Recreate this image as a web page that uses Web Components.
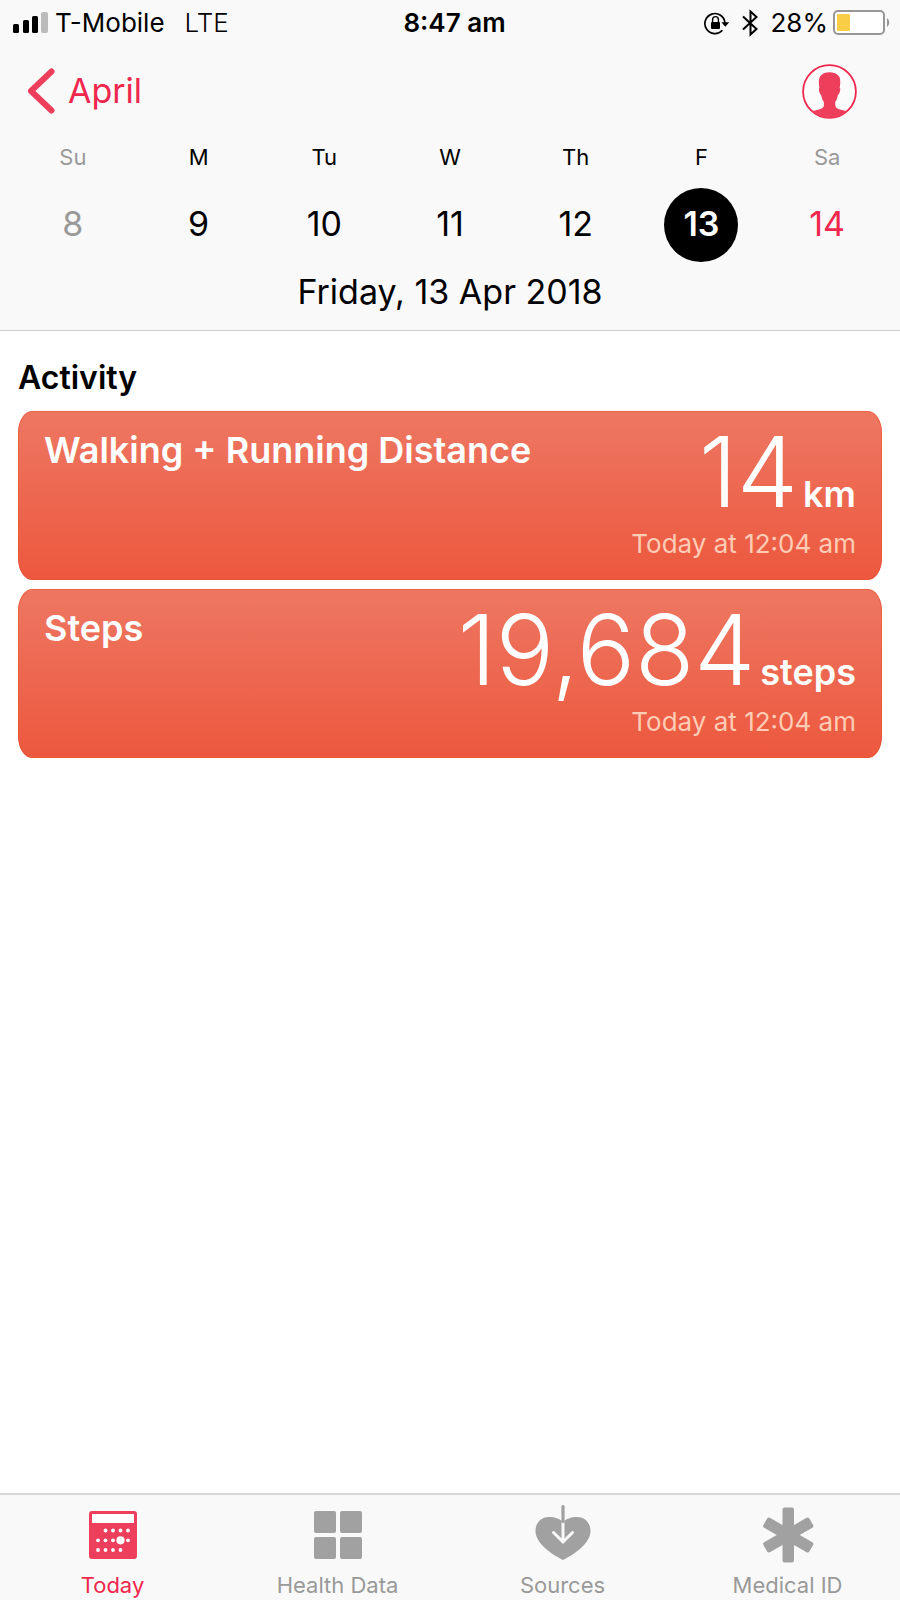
<!DOCTYPE html>
<html lang="en">
<head>
<meta charset="utf-8">
<meta name="viewport" content="width=device-width, initial-scale=1">
<title>Health</title>
<style>
html, body { margin: 0; height: 100%; }
body {
  font-family: Inter, Roboto, sans-serif;
  color: #000;
  background: #fff;
  --accent: #ed3f5c;
  --accent-text: #f0274d;
  --bar: #f9f9f9;
  --line: #cbcbcb;
  --muted: #999;
}
</style>
</head>
<body>
<health-app></health-app>

<script>
function define(name, html) {
  const template = document.createElement('template');
  template.innerHTML = html;
  customElements.define(name, class extends HTMLElement {
    constructor() {
      super();
      this.attachShadow({ mode: 'open' }).append(template.content.cloneNode(true));
    }
  });
}

define('status-bar', `
<style>
  :host { display: grid; grid-template-columns: 1fr auto 1fr; align-items: center; height: 46px; padding: 0 9px 0 12px; font-size: 26px; line-height: 32px; }
  .side { display: flex; align-items: center; }
  .carrier { margin-left: 7px; }
  .network { margin-left: 20px; font-weight: 300; }
  .time { padding-left: 6px; font-weight: 600; }
  .right { justify-content: flex-end; }
  .bluetooth { margin: 0 12px 0 11px; }
  .battery { margin-left: 5px; }
  svg { display: block; flex: none; }
</style>
<div class="side">
  <svg width="36" height="24" viewBox="0 0 36 24" role="img" aria-label="Signal: three of four bars">
    <rect x="1" y="13" width="6" height="9" rx="1.500"/><rect x="11" y="9" width="6" height="13" rx="1.500"/>
    <rect x="20" y="5" width="6" height="17" rx="1.500"/><rect x="29" y="1" width="7" height="21" rx="2" fill="#bbb"/>
  </svg>
  <span class="carrier">T-Mobile</span><span class="network">LTE</span>
</div>
<time class="time">8:47 am</time>
<div class="side right">
  <svg width="26" height="24" viewBox="0 0 26 24" role="img" aria-label="Orientation locked">
    <path d="M18.4 19.2A10 10 0 1 1 20.9 12" fill="none" stroke="#000" stroke-width="1.7"/>
    <path d="M17.4 11.2h7.8L21.3 15.8z"/>
    <rect x="7" y="11" width="9" height="7" rx="1"/>
    <path d="M8.6 11V8.5a2.9 2.9 0 0 1 5.8 0V11" fill="none" stroke="#000" stroke-width="1.4"/>
  </svg>
  <svg class="bluetooth" width="18" height="28" viewBox="0 0 18 28" role="img" aria-label="Bluetooth on">
    <path d="M2 7.500 15.500 20 9.500 25.500V2.500L15.500 8 2 20.500" fill="none" stroke="#000" stroke-width="2"/>
  </svg>
  <span>28%</span>
  <svg class="battery" width="58" height="26" viewBox="0 0 58 26" role="img" aria-label="Battery 28 percent">
    <rect x="1" y="1" width="50" height="23" rx="4" fill="#fff" stroke="#979797" stroke-width="2"/>
    <rect x="4" y="4" width="13" height="17" rx="1" fill="#f9ce46"/>
    <path d="M54 8c3 2 3 7 0 9z" fill="#979797"/>
  </svg>
</div>
`);

define('nav-bar', `
<style>
  :host { display: flex; align-items: center; justify-content: space-between; height: 90px; padding: 0 43px 0 27px; }
  a { display: flex; align-items: center; gap: 13px; color: var(--accent-text); font-size: 34px; line-height: 44px; text-decoration: none; }
  button { padding: 0; border: 0; background: none; }
  svg { display: block; }
</style>
<a href="#april">
  <svg width="28" height="46" viewBox="0 0 28 46" aria-hidden="true"><path d="M24.500 3.500 4 23 24.500 42.500" fill="none" stroke="var(--accent)" stroke-width="6" stroke-linecap="round" stroke-linejoin="round"/></svg>
  <slot></slot>
</a>
<button type="button" aria-label="Profile">
  <svg width="55" height="55" viewBox="0 0 55 55">
    <circle cx="27.500" cy="27.500" r="26.400" fill="#fbfbfb" stroke="var(--accent-text)" stroke-width="1.800"/>
    <path d="M10 47.500c4-2 9-1.300 11.400-4.500.8-1.500.5-4 .3-5.500-1.400-1.500-2-4-2.500-6.500-1.500-1-2.400-4-2.300-6.500l.6-.3c-.8-4-1.300-10 1.200-12.500 2-2.500 5-3.500 8.800-3.500s6.500 1 8.800 3.300c2.800 2.500 2 8.700 1.300 12.700l.7.300c0 2.500-.8 5.500-2.400 6.500-.5 2.500-1.100 5-2.500 6.500-.2 1.500-.3 4 .4 5.500 2.200 3.200 7.200 2.500 11.200 4.500A26.500 26.500 0 0 1 10 47.500z" fill="var(--accent)"/>
  </svg>
</button>
`);

define('week-day', `
<style>
  :host { display: flex; flex-direction: column; align-items: center; }
  .name { font-size: 22px; line-height: 28px; }
  button { box-sizing: border-box; width: 74px; height: 74px; margin-top: 17px; padding: 0 0 2px; border: 0; border-radius: 50%; background: none; color: inherit; font: inherit; font-size: 34px; line-height: 40px; }
  :host([weekend]) { color: var(--muted); }
  :host([upcoming]) button { color: var(--accent-text); }
  :host([selected]) button { background: #000; color: #fff; font-weight: 600; }
</style>
<span class="name"><slot name="name"></slot></span>
<button type="button"><slot></slot></button>
`);

define('week-strip', `
<style>
  :host { display: block; padding: 7px 10px 16px; }
  .days { display: grid; grid-template-columns: repeat(7, 1fr); }
  .date { margin-top: 8px; text-align: center; font-size: 34px; line-height: 44px; }
</style>
<div class="days"><slot></slot></div>
<div class="date"><slot name="date"></slot></div>
`);

define('metric-card', `
<style>
  :host { display: grid; grid-template-columns: auto 1fr; align-items: start; padding: 18px 26px 20px; border-radius: 14px / 22px; background: linear-gradient(#ee7762, #ec583e); box-shadow: inset 0 0 0 1px #e9502f80; color: #fff; }
  .title { margin: 0; font-size: 36px; line-height: 42px; font-weight: 600; }
  .value { display: flex; justify-content: flex-end; align-items: baseline; gap: 5px; }
  .number { font-size: 97px; line-height: 86px; font-weight: 300; }
  .unit { font-size: 36px; line-height: 42px; font-weight: 600; }
  .when { grid-column: 1 / 3; margin-top: 13px; text-align: right; font-size: 26px; line-height: 32px; color: #ffccb5; }
</style>
<h3 class="title"><slot name="title"></slot></h3>
<div class="value"><span class="number"><slot></slot></span><span class="unit"><slot name="unit"></slot></span></div>
<div class="when"><slot name="when"></slot></div>
`);

define('metric-section', `
<style>
  :host { display: block; padding: 27px 18px; }
  h2 { margin: 0 0 13px; font-size: 32px; line-height: 40px; font-weight: 600; }
  .cards { display: grid; gap: 9px; }
</style>
<h2><slot name="heading"></slot></h2>
<div class="cards"><slot></slot></div>
`);

define('tab-item', `
<style>
  :host { display: block; color: var(--muted); --icon: #a1a1a1; }
  :host([active]) { color: var(--accent-text); --icon: var(--accent); }
  a { display: flex; flex-direction: column; align-items: center; gap: 7px; color: inherit; font-size: 22px; line-height: 28px; text-decoration: none; }
</style>
<a href="#"><slot name="icon"></slot><span><slot></slot></span></a>
`);

define('tab-bar', `
<style>
  :host { display: grid; grid-template-columns: repeat(4, 1fr); padding: 11px 0 1px; border-top: 2px solid #d6d6d6; background: var(--bar); }
</style>
<slot></slot>
`);

define('health-app', `
<style>
  :host { display: flex; flex-direction: column; min-height: 100%; }
  header { border-bottom: 1px solid var(--line); background: var(--bar); }
  main { flex: 1; }
  svg { display: block; fill: var(--icon); overflow: visible; }
</style>
<header>
  <status-bar></status-bar>
  <nav-bar>April</nav-bar>
  <week-strip>
    <week-day weekend><span slot="name">Su</span>8</week-day>
    <week-day><span slot="name">M</span>9</week-day>
    <week-day><span slot="name">Tu</span>10</week-day>
    <week-day><span slot="name">W</span>11</week-day>
    <week-day><span slot="name">Th</span>12</week-day>
    <week-day selected><span slot="name">F</span>13</week-day>
    <week-day weekend upcoming><span slot="name">Sa</span>14</week-day>
    <span slot="date">Friday, 13 Apr 2018</span>
  </week-strip>
</header>
<main>
  <metric-section>
    <span slot="heading">Activity</span>
    <metric-card><span slot="title">Walking + Running Distance</span>14<span slot="unit">km</span><span slot="when">Today at 12:04 am</span></metric-card>
    <metric-card><span slot="title">Steps</span>19,684<span slot="unit">steps</span><span slot="when">Today at 12:04 am</span></metric-card>
  </metric-section>
</main>
<tab-bar>
  <tab-item active>
    <svg slot="icon" width="56" height="58" viewBox="0 0 56 58" aria-hidden="true">
      <rect x="4" y="5" width="48" height="48" rx="3"/>
      <rect x="7" y="8" width="42" height="9" fill="#fff"/>
      <g fill="#fff">
        <circle cx="20.500" cy="24.500" r="1.900"/><circle cx="28" cy="24.500" r="1.900"/><circle cx="35.500" cy="24.500" r="1.900"/><circle cx="43" cy="24.500" r="1.900"/>
        <circle cx="13" cy="34.300" r="1.900"/><circle cx="20.500" cy="34.300" r="1.900"/><circle cx="28" cy="34.300" r="1.900"/><circle cx="35.500" cy="34.300" r="4.100"/><circle cx="43" cy="34.300" r="1.900"/>
        <circle cx="13" cy="44" r="1.900"/><circle cx="20.500" cy="44" r="1.900"/><circle cx="28" cy="44" r="1.900"/><circle cx="35.500" cy="44" r="1.900"/>
      </g>
    </svg>Today
  </tab-item>
  <tab-item>
    <svg slot="icon" width="56" height="58" viewBox="0 0 56 58" aria-hidden="true">
      <rect x="4" y="5" width="22" height="22" rx="2"/><rect x="30" y="5" width="22" height="22" rx="2"/>
      <rect x="4" y="31" width="22" height="22" rx="2"/><rect x="30" y="31" width="22" height="22" rx="2"/>
    </svg>Health Data
  </tab-item>
  <tab-item>
    <svg slot="icon" width="56" height="58" viewBox="0 0 56 58" aria-hidden="true">
      <path d="M28 54C18 49 .5 38 .5 25 .5 16 7 11 14 11c6 0 11 2 14 5 3-3 8-5 14-5 7 0 13.500 5 13.500 14C55.500 38 38 49 28 54z"/>
      <path d="M28 16v20M18.500 26.500 28 36l9.500-9.500" fill="none" stroke="#f9f9f9" stroke-width="3" stroke-linecap="round"/>
      <rect x="26.400" y="-1" width="3.200" height="18" rx="1.500"/>
    </svg>Sources
  </tab-item>
  <tab-item>
    <svg slot="icon" width="56" height="58" viewBox="0 0 56 58" aria-hidden="true">
      <rect x="22.500" y="1.500" width="11.500" height="55" rx="2"/>
      <rect x="22.500" y="2.500" width="11.500" height="53" rx="2" transform="rotate(60 28.250 29)"/>
      <rect x="22.500" y="2.500" width="11.500" height="53" rx="2" transform="rotate(-60 28.250 29)"/>
    </svg>Medical ID
  </tab-item>
</tab-bar>
`);
</script>
</body>
</html>
